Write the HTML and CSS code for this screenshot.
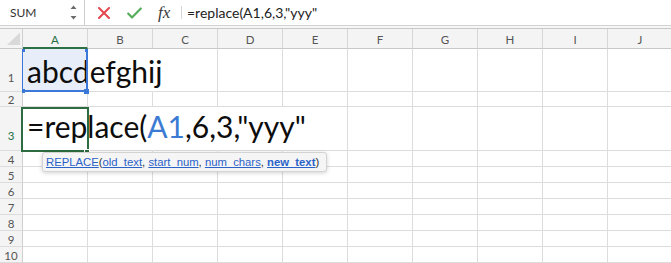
FILE: index.html
```html
<!DOCTYPE html>
<html>
<head>
<meta charset="utf-8">
<link rel="stylesheet" href="styles.css">
</head>
<body>
<div class="app">
  <div class="formula-bar">
    <div class="name-box">
      <span class="name">SUM</span>
      <svg class="spinner" width="7" height="15" viewBox="0 0 7 15"><path d="M0.5 4 L3.5 0.5 L6.5 4 Z M0.5 11 L6.5 11 L3.5 14.5 Z" fill="#6b6b6b"/></svg>
    </div>
    <svg class="cancel" width="12" height="12" viewBox="0 0 12 12"><path d="M1 1 L11 11 M11 1 L1 11" stroke="#e4474d" stroke-width="2" stroke-linecap="round"/></svg>
    <svg class="enter" width="15" height="12" viewBox="0 0 15 12"><path d="M1.2 6.6 L5 10.5 L13.8 1.5" fill="none" stroke="#56ad5c" stroke-width="2.2" stroke-linecap="round" stroke-linejoin="round"/></svg>
    <span class="fx">fx</span>
    <span class="fb-sep"></span>
    <span class="fb-input">=replace(A1,6,3,"yyy"</span>
  </div>
  <div class="bar-gap"></div>
  <div class="sheet">
    <div class="grid">
      <div class="corner"><svg width="22" height="19" viewBox="0 0 22 19"><path d="M7 16 L20 3.5 L20 16 Z" fill="#d9d9d9"/></svg></div>
      <div class="ch active">A</div><div class="ch">B</div><div class="ch">C</div><div class="ch">D</div><div class="ch">E</div><div class="ch">F</div><div class="ch">G</div><div class="ch">H</div><div class="ch">I</div><div class="ch">J</div>

      <div class="rh tall1">1</div>
      <div class="c a1">
        <div class="range-hl"><i class="h tl"></i><i class="h tr"></i><i class="h bl"></i><i class="h br"></i></div>
        <span class="big">abcdefghij</span>
      </div>
      <div class="c nb"></div><div class="c"></div><div class="c"></div><div class="c"></div><div class="c"></div><div class="c"></div><div class="c"></div><div class="c"></div><div class="c"></div>

      <div class="rh">2</div>
      <div class="c"></div><div class="c"></div><div class="c"></div><div class="c"></div><div class="c"></div><div class="c"></div><div class="c"></div><div class="c"></div><div class="c"></div><div class="c"></div>

      <div class="rh tall3 active">3</div>
      <div class="c a3 nb">
        <div class="active-box"></div><i class="fill-handle"></i>
        <span class="big edit">=replace(<span class="ref">A1</span>,6,3,"yyy"</span>
      </div>
      <div class="c nb"></div><div class="c nb"></div><div class="c nb"></div><div class="c"></div><div class="c"></div><div class="c"></div><div class="c"></div><div class="c"></div><div class="c"></div>

      <div class="rh">4</div>
      <div class="c"></div><div class="c"></div><div class="c"></div><div class="c"></div><div class="c"></div><div class="c"></div><div class="c"></div><div class="c"></div><div class="c"></div><div class="c"></div>
      <div class="rh">5</div>
      <div class="c"></div><div class="c"></div><div class="c"></div><div class="c"></div><div class="c"></div><div class="c"></div><div class="c"></div><div class="c"></div><div class="c"></div><div class="c"></div>
      <div class="rh">6</div>
      <div class="c"></div><div class="c"></div><div class="c"></div><div class="c"></div><div class="c"></div><div class="c"></div><div class="c"></div><div class="c"></div><div class="c"></div><div class="c"></div>
      <div class="rh">7</div>
      <div class="c"></div><div class="c"></div><div class="c"></div><div class="c"></div><div class="c"></div><div class="c"></div><div class="c"></div><div class="c"></div><div class="c"></div><div class="c"></div>
      <div class="rh">8</div>
      <div class="c"></div><div class="c"></div><div class="c"></div><div class="c"></div><div class="c"></div><div class="c"></div><div class="c"></div><div class="c"></div><div class="c"></div><div class="c"></div>
      <div class="rh">9</div>
      <div class="c"></div><div class="c"></div><div class="c"></div><div class="c"></div><div class="c"></div><div class="c"></div><div class="c"></div><div class="c"></div><div class="c"></div><div class="c"></div>
      <div class="rh">10</div>
      <div class="c"></div><div class="c"></div><div class="c"></div><div class="c"></div><div class="c"></div><div class="c"></div><div class="c"></div><div class="c"></div><div class="c"></div><div class="c"></div>
    </div>
    <div class="tooltip"><a class="fn">REPLACE</a>(<a>old_text</a>, <a>start_num</a>, <a>num_chars</a>, <a class="cur">new_text</a>)</div>
  </div>
</div>
</body>
</html>
```

FILE: styles.css
```css
* { box-sizing: border-box; }
html, body { margin: 0; padding: 0; }
body {
  width: 671px;
  height: 263px;
  overflow: hidden;
  background: #ffffff;
  font-family: Lato, "Liberation Sans", sans-serif;
}

/* formula bar */
.formula-bar {
  display: flex;
  align-items: center;
  height: 26px;
  border-bottom: 1px solid #d2d2d2;
  background: #ffffff;
}
.name-box {
  display: flex;
  align-items: center;
  justify-content: space-between;
  width: 85px;
  height: 100%;
  border-right: 1px solid #cfcfcf;
  padding: 0 7px 0 10px;
}
.name {
  font-size: 12px;
  color: #333333;
}
.spinner { display: block; }
.cancel { margin-left: 13px; }
.enter { margin-left: 17px; }
.fx {
  width: 16px;
  margin-left: 16px;
  font-family: "Liberation Serif", serif;
  font-style: italic;
  font-size: 17px;
  color: #3a3a3a;
  line-height: 1;
}
.fb-sep {
  width: 1px;
  height: 13px;
  margin-left: 7px;
  background: #d6d6d6;
}
.fb-input {
  padding-left: 5px;
  font-size: 14px;
  color: #222222;
}
.bar-gap {
  height: 2px;
  background: #f6f6f6;
}

/* sheet */
.sheet {
  position: relative;
  border-top: 1px solid #c8c8c8;
}
.grid {
  display: grid;
  grid-template-columns: 23px repeat(10, 65px);
  grid-template-rows: 20px 43px 15px 44px repeat(7, 16px);
}
.grid > div {
  border-right: 1px solid #dcdcdc;
  border-bottom: 1px solid #dcdcdc;
}
.corner {
  background: #f4f4f4;
  border-right-color: #cfcfcf !important;
  border-bottom-color: #c8c8c8 !important;
}
.corner svg { display: block; }
.ch {
  display: flex;
  align-items: center;
  justify-content: center;
  padding-top: 2px;
  background: #f4f4f4;
  border-right-color: #d6d6d6 !important;
  border-bottom-color: #c8c8c8 !important;
  font-size: 11.5px;
  color: #555555;
}
.ch.active {
  color: #1f7043;
  border-bottom: 2px solid #2b7145 !important;
}
.rh {
  display: flex;
  align-items: flex-end;
  justify-content: center;
  padding-bottom: 1px;
  background: #f4f4f4;
  border-right-color: #cfcfcf !important;
  font-size: 11.5px;
  line-height: 1;
  color: #555555;
}
.rh.tall1 { padding-bottom: 8px; }
.rh.tall3 { padding-bottom: 9px; }
.rh.active { color: #1f7043; }

.c { background: transparent; }
.c.nb { border-right-color: transparent !important; }

.a1 {
  position: relative;
  display: flex;
  align-items: flex-end;
  padding: 0 0 5px 4px;
  background: #e7eefa !important;
  border-right-color: transparent !important;
}
.a3 {
  position: relative;
  display: flex;
  align-items: flex-end;
  padding: 0 0 9px 4px;
}
.big {
  font-size: 30px;
  line-height: 1;
  color: #0d0d0d;
  white-space: nowrap;
}
.ref { color: #3c7bd4; }

.range-hl {
  position: absolute;
  left: -1px;
  top: 0;
  right: -1px;
  bottom: -1px;
  border-left: 1px solid #3b78d8;
  border-right: 2px solid #3b78d8;
  border-bottom: 2px solid #3b78d8;
}
.h {
  position: absolute;
  background: #3b78d8;
}
.h.tl { left: -1px; top: 0; width: 3px; height: 3px; }
.h.tr { right: -2px; top: 0; width: 3px; height: 3px; }
.h.bl { left: -1px; bottom: -3px; width: 3px; height: 4px; }
.h.br { right: -3px; bottom: -4px; width: 5px; height: 5px; }

.active-box {
  position: absolute;
  left: -2px;
  top: 0;
  right: -2px;
  bottom: -2px;
  border: 2px solid #2d6b40;
}
.fill-handle {
  position: absolute;
  right: -3px;
  bottom: -4px;
  width: 6px;
  height: 5px;
  background: #2d6b40;
  border: 1px solid #ffffff;
}

/* tooltip */
.tooltip {
  position: absolute;
  left: 42px;
  top: 123px;
  width: 285px;
  height: 20px;
  padding: 0 3px;
  background: #f5f5f5;
  border: 1px solid #d3d3d3;
  border-radius: 3px;
  box-shadow: 0 1px 4px rgba(0, 0, 0, 0.18);
  font-family: "Liberation Sans", Arial, sans-serif;
  font-size: 11.3px;
  line-height: 18px;
  color: #333333;
  white-space: nowrap;
}
.tooltip a {
  color: #2a62c8;
  text-decoration: underline;
}
.tooltip a.cur { font-weight: bold; }
```
